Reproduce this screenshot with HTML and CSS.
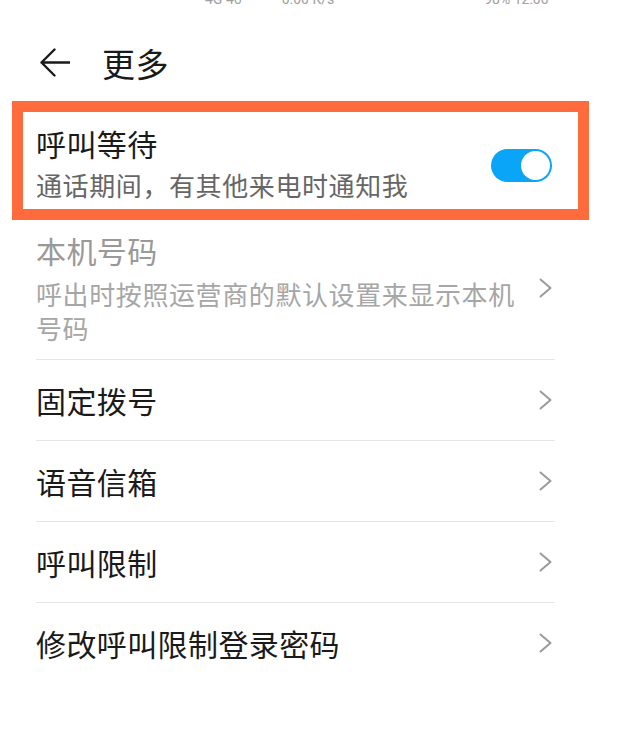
FILE: index.html
```html
<!DOCTYPE html>
<html lang="zh-CN">
<head>
<meta charset="utf-8">
<title>更多</title>
<link rel="stylesheet" href="styles.css">
</head>
<body>
<div class="status">
  <span class="st st-a">4G 46</span>
  <span class="st st-b">0.00 K/s</span>
  <span class="st st-c">98% 12:00</span>
</div>
<header class="appbar">
  <svg class="back" width="30" height="30" viewBox="0 0 30 30" aria-hidden="true">
    <path d="M14.5 1.5 L1.5 14.5 L14.5 27.5 M1.5 14.5 H29.5" fill="none" stroke="#1a1a1a" stroke-width="2.4" stroke-linecap="round" stroke-linejoin="round"/>
  </svg>
  <h1 class="page-title">更多</h1>
</header>

<section class="highlight">
  <div class="hl-text">
    <div class="title">呼叫等待</div>
    <div class="sub">通话期间，有其他来电时通知我</div>
  </div>
  <div class="toggle"><span class="knob"></span></div>
</section>

<ul class="list">
  <li class="row row-tall disabled">
    <div class="row-text">
      <div class="title">本机号码</div>
      <div class="sub">呼出时按照运营商的默认设置来显示本机号码</div>
    </div>
    <div class="chev-box">
      <svg class="chev" width="13" height="20" viewBox="0 0 13 20" aria-hidden="true"><polyline points="1.5,1.5 11.5,10 1.5,18.5" fill="none" stroke="#9a9a9a" stroke-width="2" stroke-linecap="round" stroke-linejoin="round"/></svg>
    </div>
  </li>
  <li class="row">
    <div class="row-text"><div class="title">固定拨号</div></div>
    <div class="chev-box">
      <svg class="chev" width="13" height="20" viewBox="0 0 13 20" aria-hidden="true"><polyline points="1.5,1.5 11.5,10 1.5,18.5" fill="none" stroke="#9a9a9a" stroke-width="2" stroke-linecap="round" stroke-linejoin="round"/></svg>
    </div>
  </li>
  <li class="row">
    <div class="row-text"><div class="title">语音信箱</div></div>
    <div class="chev-box">
      <svg class="chev" width="13" height="20" viewBox="0 0 13 20" aria-hidden="true"><polyline points="1.5,1.5 11.5,10 1.5,18.5" fill="none" stroke="#9a9a9a" stroke-width="2" stroke-linecap="round" stroke-linejoin="round"/></svg>
    </div>
  </li>
  <li class="row">
    <div class="row-text"><div class="title">呼叫限制</div></div>
    <div class="chev-box">
      <svg class="chev" width="13" height="20" viewBox="0 0 13 20" aria-hidden="true"><polyline points="1.5,1.5 11.5,10 1.5,18.5" fill="none" stroke="#9a9a9a" stroke-width="2" stroke-linecap="round" stroke-linejoin="round"/></svg>
    </div>
  </li>
  <li class="row">
    <div class="row-text"><div class="title">修改呼叫限制登录密码</div></div>
    <div class="chev-box">
      <svg class="chev" width="13" height="20" viewBox="0 0 13 20" aria-hidden="true"><polyline points="1.5,1.5 11.5,10 1.5,18.5" fill="none" stroke="#9a9a9a" stroke-width="2" stroke-linecap="round" stroke-linejoin="round"/></svg>
    </div>
  </li>
</ul>
</body>
</html>
```

FILE: styles.css
```css
* { box-sizing: border-box; }

html, body {
  margin: 0;
  padding: 0;
  background: #ffffff;
}

body {
  width: 632px;
  height: 754px;
  overflow: hidden;
  font-family: "Noto Sans CJK SC", "Noto Sans", sans-serif;
  color: #1a1a1a;
}

/* cropped status bar: only the bottom of the glyphs shows */
.status {
  height: 5px;
  overflow: hidden;
  display: flex;
  align-items: flex-end;
  padding-left: 205px;
  gap: 40px;
}

.st {
  font-family: "Roboto", "Liberation Sans", sans-serif;
  font-size: 14px;
  line-height: 12px;
  color: #a0a0a0;
  white-space: nowrap;
}

.st-c { margin-left: 110px; }

.appbar {
  display: flex;
  align-items: center;
  height: 96px;
  padding: 38px 0 18px 40px;
  gap: 32px;
}

.back { display: block; flex: none; }

.page-title {
  margin: 0;
  font-size: 33px;
  font-weight: 400;
  line-height: 40px;
  letter-spacing: 0.5px;
  color: #1a1a1a;
}

.highlight {
  display: flex;
  align-items: center;
  margin: 0 43px 0 12px;
  height: 119px;
  border: 11px solid #ff6b3d;
  padding: 12px 26px 7px 13px;
}

.hl-text { flex: 1; }

.title {
  font-size: 30px;
  line-height: 38px;
  letter-spacing: 0.4px;
  color: #1a1a1a;
}

.sub {
  font-size: 26px;
  line-height: 34px;
  letter-spacing: 0.6px;
  color: #666666;
}

.hl-text .sub { margin-top: 6px; }

.toggle {
  flex: none;
  width: 61px;
  height: 33px;
  margin-top: 4px;
  border-radius: 17px;
  background: #0aa5f7;
  display: flex;
  align-items: center;
  justify-content: flex-end;
  padding-right: 2px;
}

.knob {
  width: 29px;
  height: 29px;
  border-radius: 50%;
  background: #ffffff;
}

.list {
  list-style: none;
  margin: 0 77px 0 36px;
  padding: 0;
}

.row {
  display: flex;
  align-items: center;
  height: 81px;
  border-top: 1px solid #e6e6e6;
}

.row:first-child { border-top: none; }

.row-tall {
  height: 139px;
  padding: 11px 0 14px;
}

.row-text { flex: 1; min-width: 0; }

.row-tall .sub { margin-top: 8px; }

.disabled .title { color: #999999; }
.disabled .sub { color: #a6a6a6; }

.chev-box {
  flex: none;
  width: 36px;
  display: flex;
  justify-content: flex-end;
  padding-right: 3px;
}

.chev { display: block; }
```
